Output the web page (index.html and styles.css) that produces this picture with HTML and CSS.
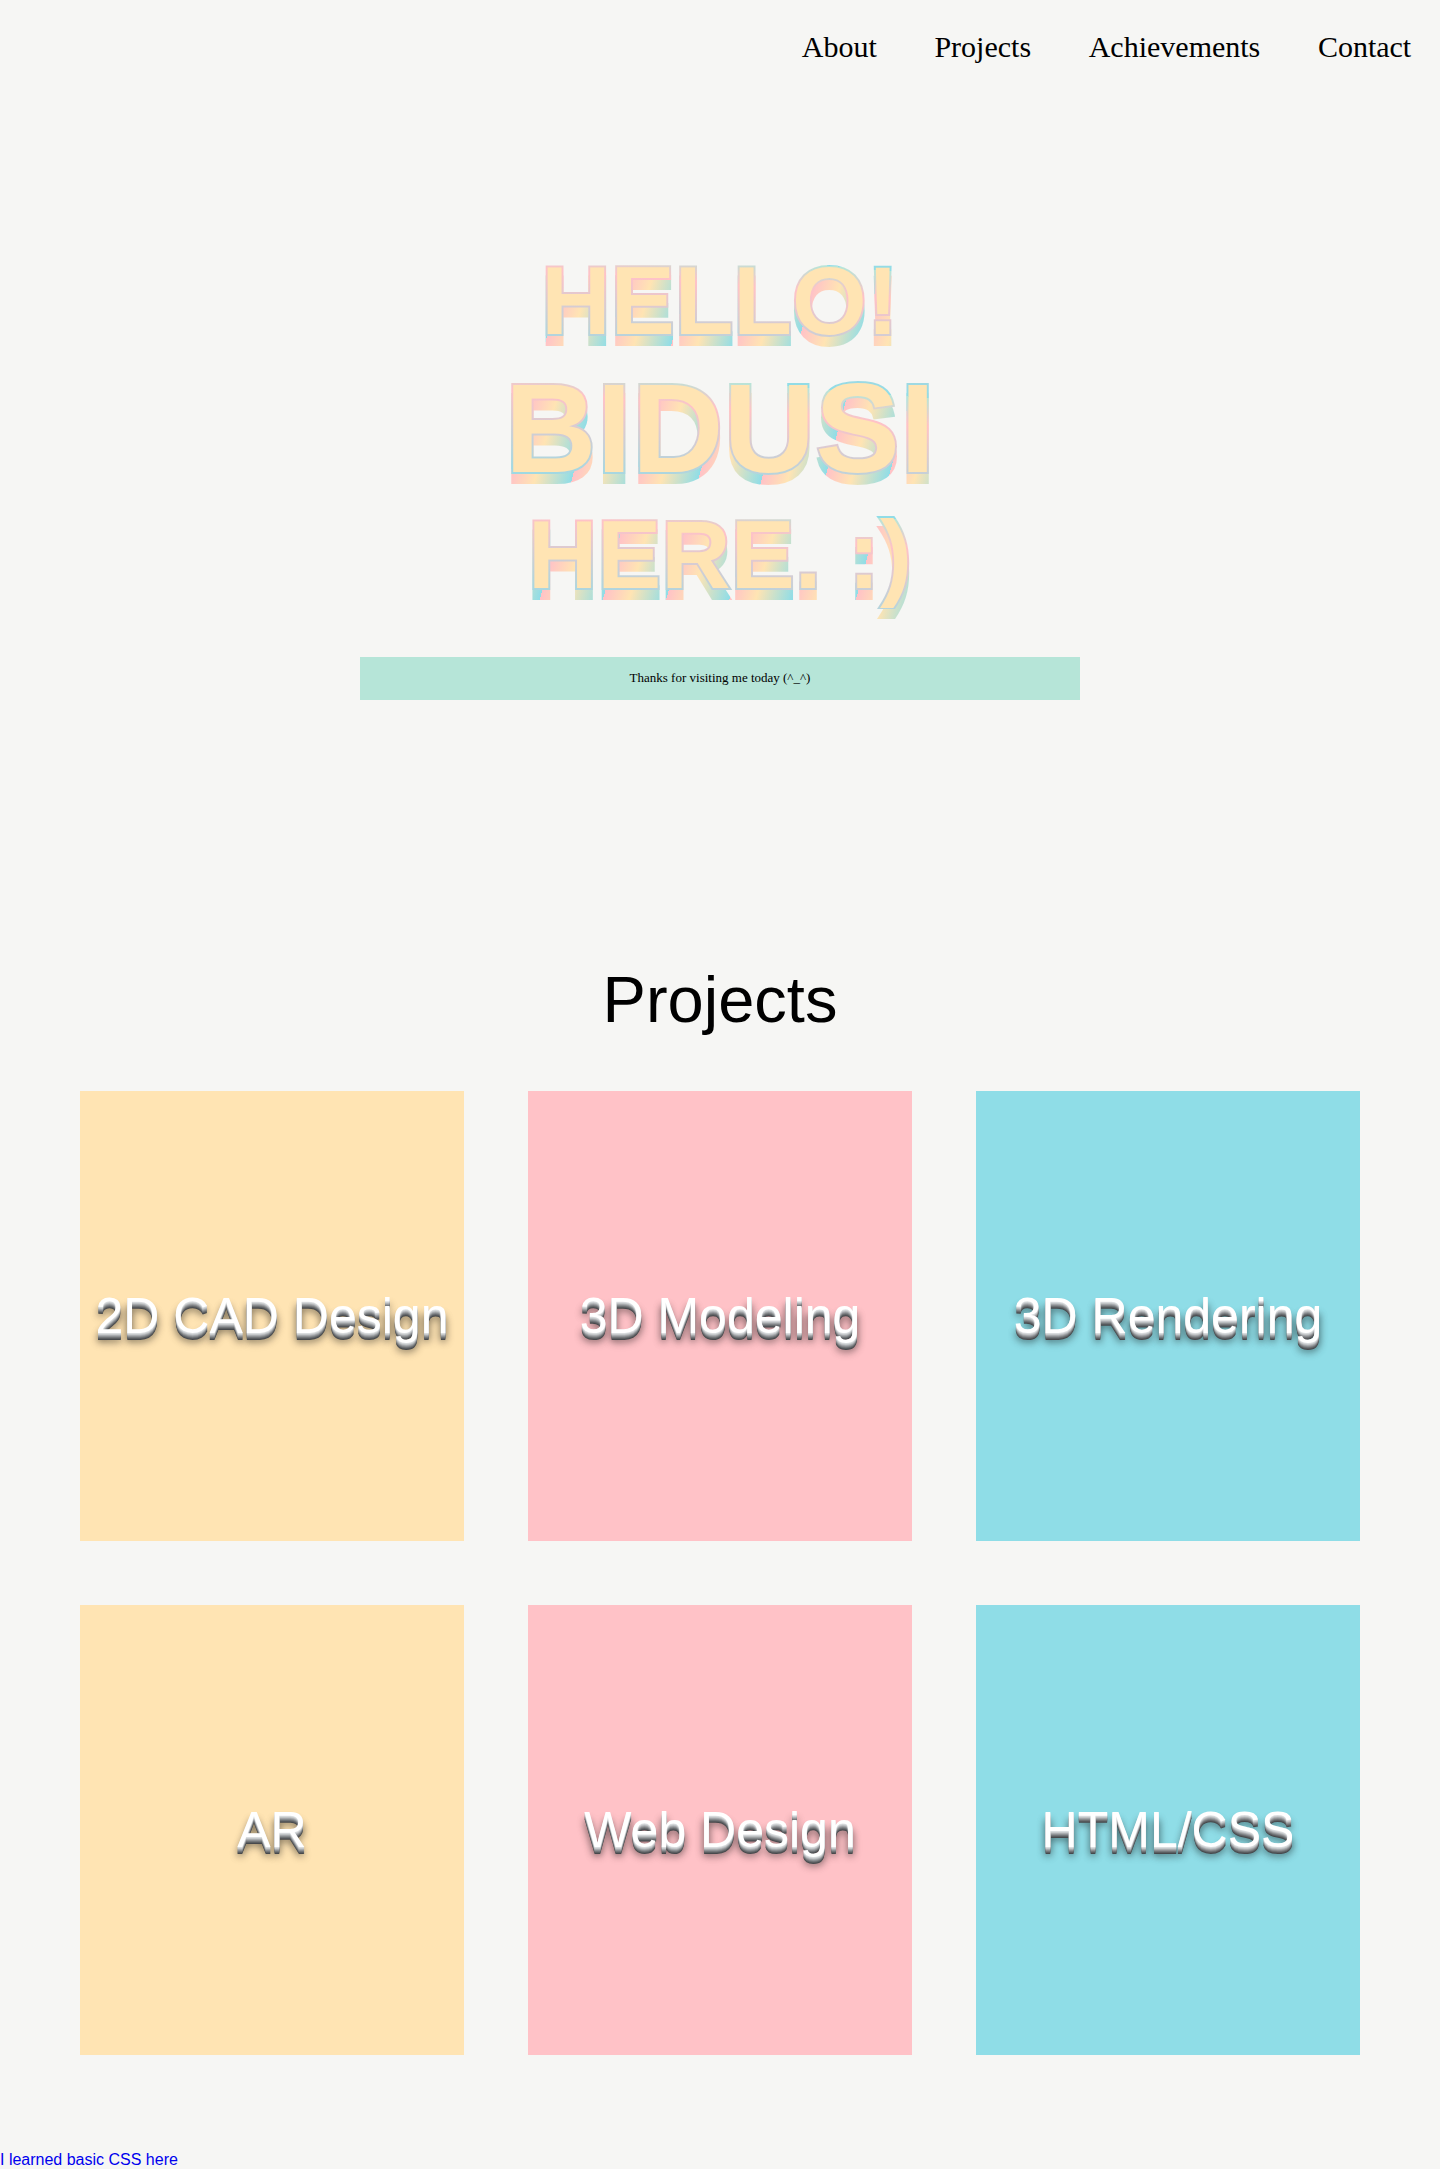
FILE: index.html
```html
<!DOCTYPE html>
<html lang="en">
<head>
<meta charset="utf-8">
<title>Bidusi</title>
<meta name="viewport" content="width=device-width, initial-scale=1">
<link rel="stylesheet" href="styles.css">
</head>
<body>
<header>
  <nav class="nav">
    <a href="#about">About</a>
    <a href="#projects">Projects</a>
    <a href="#achievements">Achievements</a>
    <a href="#contact">Contact</a>
  </nav>
</header>
<main>
  <section class="hero" id="about">
    <h1 class="hero-title">
      <span class="layer back"><span class="line">HELLO!</span><span class="line name">BIDUSI</span><span class="line">HERE. :)</span></span>
      <span class="layer front" aria-hidden="true"><span class="line">HELLO!</span><span class="line name">BIDUSI</span><span class="line">HERE. :)</span></span>
    </h1>
    <p class="banner">Thanks for visiting me today (^_^)</p>
  </section>
  <section class="projects" id="projects">
    <h2 class="section-title">Projects</h2>
    <div class="grid">
      <a class="card gold" href="#cad">2D CAD Design</a>
      <a class="card pink" href="#modeling">3D Modeling</a>
      <a class="card cyan" href="#rendering">3D Rendering</a>
      <a class="card gold" href="#ar">AR</a>
      <a class="card pink" href="#web">Web Design</a>
      <a class="card cyan" href="#html">HTML/CSS</a>
    </div>
  </section>
</main>
<footer class="footer"><a href="#css">I learned basic CSS here</a></footer>
</body>
</html>
```
FILE: styles.css
```css
:root {
  --paper: #f6f6f4;
  --gold: #ffe4b3;
  --pink: #ffc2c7;
  --mint: #b6e5d8;
  --cyan: #8fdde7;
}

* { box-sizing: border-box; }

body {
  margin: 0;
  background: var(--paper);
  color: #000;
  font-family: "Liberation Sans", Arial, sans-serif;
  font-size: 16px;
}

a { text-decoration: none; }

.nav {
  display: flex;
  justify-content: flex-end;
  gap: 4vw;
  padding: 30px 2%;
  font: 30px/34px "Liberation Serif", "Times New Roman", serif;
}

.nav a { color: #000; }

.hero {
  display: flex;
  flex-direction: column;
  align-items: center;
  padding: 163px 0 262px;
}

/* Two stacked copies of the heading: striped base, raised outlined face */
.hero-title {
  display: grid;
  margin: 0;
  font-size: 96px;
  font-weight: bold;
  text-align: center;
}

.layer {
  grid-area: 1 / 1;
  -webkit-text-stroke: 4px transparent;
  -webkit-background-clip: text;
  background-clip: text;
}

.back {
  color: transparent;
  background-image: repeating-linear-gradient(105deg, var(--pink) 0%, var(--gold) 5%, var(--cyan) 12%);
}

.front {
  color: var(--gold);
  background-image: repeating-linear-gradient(5deg, var(--cyan) 0%, var(--pink) 24%, var(--mint) 31%);
  transform: translateY(-10px);
}

.line {
  display: block;
  line-height: 108px;
}

.name {
  font-size: 127px;
  line-height: 146px;
}

.banner {
  width: 50%;
  margin: 38px 0 0;
  padding: 13px 14px 15px;
  background: var(--mint);
  font: 13px/15px "Liberation Serif", "Times New Roman", serif;
  text-align: center;
}

.section-title {
  margin: 0;
  font-size: 65px;
  font-weight: normal;
  line-height: 75px;
  text-align: center;
}

.grid {
  display: grid;
  grid-template-columns: repeat(3, 1fr);
  gap: 64px;
  padding: 54px 80px 96px;
}

.card {
  display: flex;
  align-items: center;
  justify-content: center;
  min-height: 450px;
  color: #fff;
  font-size: 50px;
  line-height: 58px;
  text-align: center;
  text-shadow:
    0 1px 0 #dadddf,
    0 2px 0 #c6c9cb,
    0 3px 0 #a9acaf,
    0 4px 0 #8e9194,
    0 5px 0 #737679,
    0 6px 0 #5b5e61,
    0 7px 0 #47494c,
    0 8px 7px rgba(0, 0, 0, 0.5),
    0 9px 10px rgba(0, 0, 0, 0.25);
}

.gold { background: var(--gold); }
.pink { background: var(--pink); }
.cyan { background: var(--cyan); }

.footer { line-height: 18px; }
.footer a { color: #0000ee; }
```
